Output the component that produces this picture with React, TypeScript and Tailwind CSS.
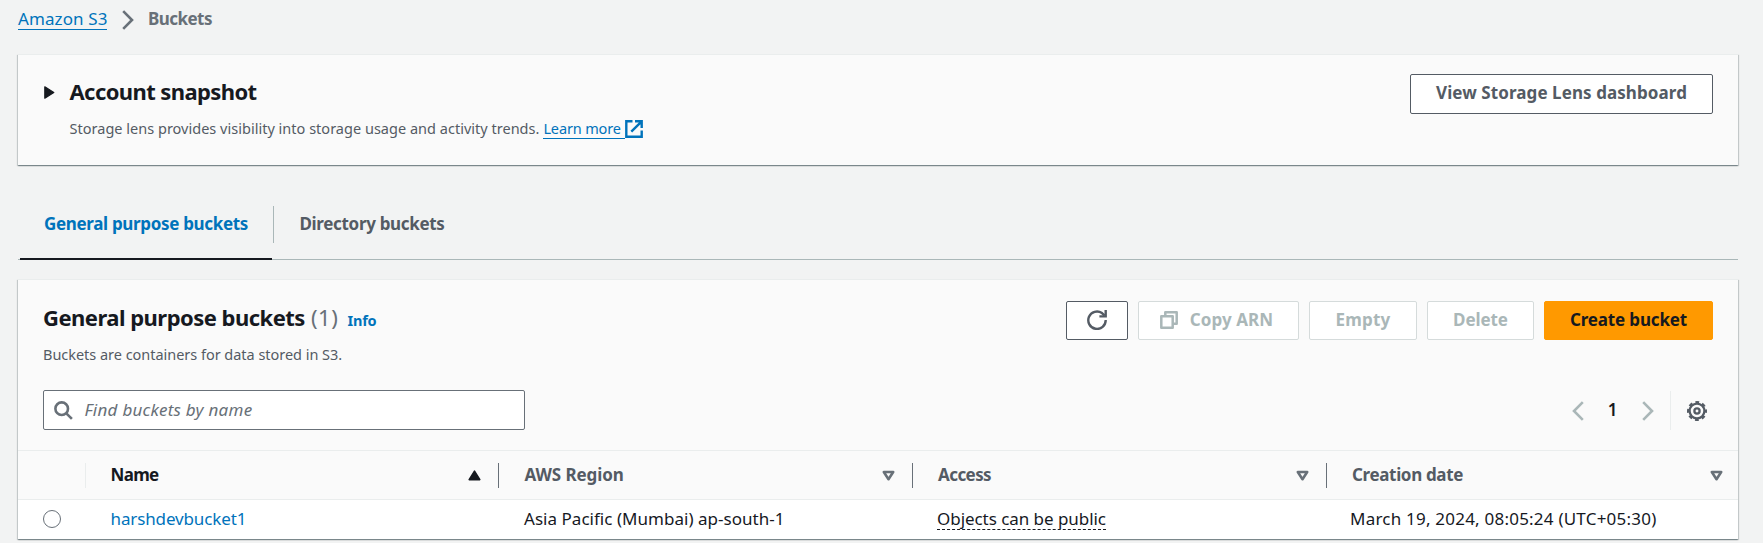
import type { ReactNode } from "react";

const card =
  "bg-[#fafafa] border-t border-[#eaeded] shadow-[0_1px_1px_0_rgba(0,28,36,0.3),1px_1px_1px_0_rgba(0,28,36,0.15),-1px_1px_1px_0_rgba(0,28,36,0.15)]";

function Button({ children, className }: { children: ReactNode; className: string }) {
  return (
    <button
      className={`flex shrink-0 items-center justify-center whitespace-nowrap rounded-[2px] border font-bold leading-6 ${className}`}
    >
      {children}
    </button>
  );
}

function SortDown() {
  return (
    <svg width="13" height="11" viewBox="0 0 13 11" fill="none" stroke="#687078" strokeWidth="2.6" strokeLinejoin="round">
      <path d="M1.8 2h9.4L6.5 9.2z" />
    </svg>
  );
}

function SortUp() {
  return (
    <svg width="13" height="11" viewBox="0 0 13 11" fill="#16191f" stroke="#16191f" strokeWidth="1.6" strokeLinejoin="round">
      <path d="M1.2 9.6h10.6L6.5 1.2z" />
    </svg>
  );
}

function Chevron({ dir, className }: { dir: "left" | "right"; className: string }) {
  return (
    <svg width="12" height="20" viewBox="0 0 12 20" fill="none" stroke="currentColor" strokeWidth="2.6" className={className}>
      <path d={dir === "right" ? "M1.2 1.2 10 10l-8.8 8.8" : "M10.8 1.2 2 10l8.8 8.8"} />
    </svg>
  );
}

function HeaderCell({ children, className, last, icon }: { children: ReactNode; className: string; last?: boolean; icon: ReactNode }) {
  return (
    <div className={`flex h-[25px] items-center justify-between font-bold ${last ? "pr-[15.5px]" : "border-r border-[#687078] pr-[17.5px]"} ${className}`}>
      <span className="whitespace-nowrap leading-6">{children}</span>
      {icon}
    </div>
  );
}

const grid = "grid grid-cols-[68px_413px_414px_414px_1fr]";

export default function App() {
  return (
    <div className="h-[543px] overflow-hidden bg-[#f2f3f3] pl-[18px] pr-[25px] font-['Noto_Sans',sans-serif] text-[17px] text-[#16191f]">
      <nav className="flex h-[54px] items-start pt-[6px] leading-6">
        <a className="h-6 whitespace-nowrap border-b border-[#0073bb] pt-px tracking-[0.1px] text-[#0073bb]">Amazon S3</a>
        <Chevron dir="right" className="ml-[15px] mt-[4px] text-[#687078]" />
        <span className="ml-[13.5px] pt-px font-bold tracking-[-0.53px] text-[#687078]">Buckets</span>
      </nav>

      <section className={`flex h-[111px] justify-between pl-[26px] pr-[25px] ${card}`}>
        <div className="flex pt-[20px]">
          <svg width="11" height="13" viewBox="0 0 11 13" fill="#16191f" stroke="#16191f" strokeWidth="1.2" strokeLinejoin="round" className="mt-[11px]">
            <path d="M.8.8v11.4l9-5.7z" />
          </svg>
          <div className="ml-[14.5px]">
            <h2 className="text-[22px] font-bold leading-8 tracking-[-0.6px]">Account snapshot</h2>
            <p className="mt-[9px] flex text-[14.5px] leading-6 text-[#545b64]">
              <span className="mr-[4px] whitespace-nowrap tracking-[0.015px]">
                Storage lens provides visibility into storage usage and activity trends.
              </span>
              <a className="flex text-[#0073bb]">
                <span className="-mt-px h-[24px] whitespace-nowrap border-b border-[#0073bb] pr-[4px] pt-px tracking-[-0.14px]">Learn more</span>
                <svg width="18" height="18" viewBox="0 0 18 18" fill="none" stroke="#0073bb" strokeWidth="2.4" className="mt-[4px]">
                  <path d="M7.5 1.3H1.3v15.4h15.4v-6.2M10 1.3h6.7V8M16.2 1.8 6.3 11.7" />
                </svg>
              </a>
            </p>
          </div>
        </div>
        <Button className="mt-[19px] h-[40px] w-[303px] border-[#545b64] bg-white pb-[2px] tracking-[0.08px] text-[#545b64]">
          View Storage Lens dashboard
        </Button>
      </section>

      <div className="mt-[38px] flex h-[57px] border-b border-[#aab7b8] font-bold leading-6">
        <div className="ml-[2px] flex w-[252px] flex-col justify-between">
          <span className="whitespace-nowrap pl-[24px] pt-[9px] tracking-[-0.33px] text-[#0073bb]">General purpose buckets</span>
          <span className="-mb-px h-[2px] bg-[#16191f]" />
        </div>
        <div className="ml-px mt-[3px] h-[37px] border-l border-[#aab7b8] pl-[25.5px] pt-[6px] tracking-[-0.33px] text-[#545b64]">Directory buckets</div>
      </div>

      <section className={`mt-[19px] h-[260px] ${card}`}>
        <div className="flex h-[110px] justify-between pl-[25px] pr-[25px]">
          <div className="pt-[21px]">
            <div className="flex items-baseline whitespace-nowrap leading-8">
              <h2 className="text-[22px] font-bold tracking-[-0.52px]">General purpose buckets</h2>
              <span className="ml-[6px] text-[22px] tracking-[0.6px] text-[#687078]">(1)</span>
              <a className="ml-[9px] text-[14.5px] font-bold tracking-[-0.2px] text-[#0073bb]">Info</a>
            </div>
            <p className="mt-[6px] text-[14.5px] leading-6 tracking-[-0.03px] text-[#545b64]">Buckets are containers for data stored in S3.</p>
          </div>
          <div className="flex gap-[10px] pt-[21px]">
            <Button className="h-[39px] w-[62px] border-[#545b64] bg-white">
              <svg width="20" height="20" viewBox="0 0 20 20" fill="none" stroke="#545b64" strokeWidth="2.4" className="-mt-px">
                <path d="M18.7 10A8.7 8.7 0 1 1 15 3.1l2.6 2.4" />
                <path d="M18.7 0v6.4H12.4" />
              </svg>
            </Button>
            <Button className="h-[39px] w-[161px] border-[#d5dbdb] bg-white pb-[1px] pr-[4px] tracking-[0.1px] text-[#aab7b8]">
              <svg width="18" height="18" viewBox="0 0 18 18" fill="none" stroke="#aab7b8" strokeWidth="2.5" strokeLinejoin="round" className="mr-[12px]">
                <path d="M1.3 5.3h11.4v11.4H1.3z" />
                <path d="M5.3 5V1.3h11.4v11.4H13" />
              </svg>
              Copy ARN
            </Button>
            <Button className="h-[39px] w-[108px] border-[#d5dbdb] bg-white pb-[1px] tracking-[0.2px] text-[#aab7b8]">Empty</Button>
            <Button className="h-[39px] w-[107px] border-[#d5dbdb] bg-white pb-[1px] tracking-[-0.07px] text-[#aab7b8]">Delete</Button>
            <Button className="h-[39px] w-[169px] border-[#ff9900] bg-[#ff9900] pb-[1px] tracking-[-0.16px] text-[#16191f]">Create bucket</Button>
          </div>
        </div>

        <div className="flex h-[60px] items-start justify-between pl-[25px] pr-[31px]">
          <div className="flex h-[40px] w-[482px] items-center rounded-[2px] border border-[#687078] bg-white pl-[10px]">
            <svg width="19" height="19" viewBox="0 0 19 19" fill="none" stroke="#687078" strokeWidth="2.6">
              <circle cx="7.7" cy="7.7" r="6.3" />
              <path d="m12.3 12.3 5.6 5.6" />
            </svg>
            <span className="ml-[11.5px] pb-[1px] italic leading-6 tracking-[0.26px] text-[#687078]">Find buckets by name</span>
          </div>
          <div className="flex h-[41px] items-center">
            <Chevron dir="left" className="text-[#aab7b8]" />
            <span className="w-[57px] pb-[2px] text-center font-semibold leading-6">1</span>
            <Chevron dir="right" className="ml-px text-[#aab7b8]" />
            <span className="ml-[16px] mr-[16px] h-[39px] w-px bg-[#eaeded]" />
            <svg width="20" height="20" viewBox="-10 -10 20 20" fill="none" stroke="#545b64">
              <circle r="7.4" strokeWidth="2.3" />
              <circle r="8.9" strokeWidth="2.2" strokeDasharray="3.8 3.19" strokeDashoffset="1.9" />
              <circle r="2.6" strokeWidth="2.3" />
            </svg>
          </div>
        </div>

        <div className={`h-[50px] items-center border-y border-[#eaeded] ${grid}`}>
          <div className="h-[25px] border-r border-[#eaeded]" />
          <HeaderCell className="pl-[24.5px] tracking-[-0.68px]" icon={<SortUp />}>Name</HeaderCell>
          <HeaderCell className="pl-[25.5px] tracking-[-0.1px] text-[#545b64]" icon={<SortDown />}>AWS Region</HeaderCell>
          <HeaderCell className="pl-[25px] tracking-[-0.58px] text-[#545b64]" icon={<SortDown />}>Access</HeaderCell>
          <HeaderCell last className="pl-[25px] tracking-[-0.35px] text-[#545b64]" icon={<SortDown />}>Creation date</HeaderCell>
        </div>

        <div className={`h-[39px] whitespace-nowrap bg-white pt-[7px] leading-6 ${grid}`}>
          <div className="pl-[25px] pt-[3px]">
            <span className="block h-[18px] w-[18px] rounded-full border border-[#687078] bg-white" />
          </div>
          <a className="pl-[24.5px] tracking-[-0.13px] text-[#0073bb]">harshdevbucket1</a>
          <span className="pl-[25px] tracking-[0.03px]">Asia Pacific (Mumbai) ap-south-1</span>
          <span className="pl-[24px]">
            <span className="block h-[23px] w-[169px] border-b border-dashed border-[#16191f] tracking-[-0.05px]">Objects can be public</span>
          </span>
          <span className="pl-[23px] tracking-[0.22px]">March 19, 2024, 08:05:24 (UTC+05:30)</span>
        </div>
      </section>
    </div>
  );
}
